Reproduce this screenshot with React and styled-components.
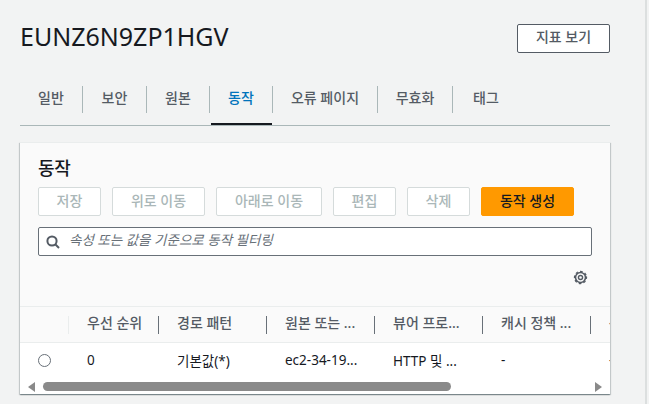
import React from 'react';
import styled, { createGlobalStyle } from 'styled-components';

const GlobalStyle = createGlobalStyle`
  html, body {
    margin: 0;
    height: 100%;
    overflow: hidden;
    background: #f2f3f3;
    font-family: "Noto Sans", "Noto Sans CJK KR", sans-serif;
    color: #16191f;
  }
  * { box-sizing: border-box; }
`;

const Page = styled.div`
  display: flex;
  width: 649px;
  height: 404px;
`;

const Main = styled.main`
  width: 645px;
  padding: 0 35px 0 20px;
`;

const PageEdge = styled.div`
  width: 4px;
  background: #f2f3f3;
  border-left: 2px solid #dcdfdf;
`;

const Header = styled.header`
  display: flex;
  align-items: flex-start;
  justify-content: space-between;
  padding-top: 24px;
  height: 86px;
`;

const Title = styled.h1`
  margin: 0;
  font-size: 25px;
  line-height: 24px;
  font-weight: 400;
`;

const OutlineButton = styled.button`
  width: 93px;
  height: 29px;
  padding: 0 0 5px;
  background: #fff;
  border: 1px solid #545b64;
  border-radius: 2px;
  font: 500 14px "Noto Sans", "Noto Sans CJK KR", sans-serif;
  color: #545b64;
`;

const Tabs = styled.nav`
  display: flex;
  height: 40px;
  border-bottom: 1px solid #aab7b8;
`;

const Tab = styled.div`
  position: relative;
  flex: 0 0 ${p => p.$width}px;
  height: 27px;
  padding: 0 0 5px ${p => (p.$last ? '20px' : '0')};
  display: flex;
  align-items: center;
  justify-content: ${p => (p.$last ? 'flex-start' : 'center')};
  font-size: 14px;
  font-weight: 500;
  color: ${p => (p.$active ? '#0073bb' : '#545b64')};
  border-right: ${p => (p.$last ? '0' : '1px solid #aab7b8')};

  ${p => p.$active && `
    &::after {
      content: '';
      position: absolute;
      left: 1px;
      right: 0;
      top: 37px;
      height: 2px;
      background: #16191f;
    }
  `}
`;

const Card = styled.section`
  margin-top: 16px;
  height: 252px;
  background: #fafafa;
  border-top: 1px solid #eaeded;
  box-shadow: 0 1px 1px 0 rgba(0, 28, 36, 0.3), 1px 1px 1px 0 rgba(0, 28, 36, 0.15), -1px 1px 1px 0 rgba(0, 28, 36, 0.15);
  display: flex;
  flex-direction: column;
`;

const CardHead = styled.div`
  padding: 15px 18px 0;
  height: 163px;
`;

const CardTitle = styled.h2`
  margin: 0;
  font-size: 18px;
  line-height: 21px;
  font-weight: 500;
  letter-spacing: -0.3px;
`;

const Toolbar = styled.div`
  display: flex;
  gap: 11px;
  margin-top: 8px;
`;

const ActionButton = styled.button`
  flex: 0 0 ${p => p.$width}px;
  height: 29px;
  padding: 0 0 4px;
  background: ${p => (p.$primary ? '#ff9900' : '#fff')};
  border: 1px solid ${p => (p.$primary ? '#ff9900' : '#d5dbdb')};
  border-radius: 2px;
  font: 500 14px "Noto Sans", "Noto Sans CJK KR", sans-serif;
  color: ${p => (p.$primary ? '#16191f' : '#aab7b8')};
`;

const SearchBox = styled.div`
  display: flex;
  align-items: center;
  gap: 9px;
  width: 554px;
  height: 29px;
  margin-top: 11px;
  padding: 0 7px;
  background: #fff;
  border: 1px solid #687078;
  border-radius: 2px;
`;

const Placeholder = styled.span`
  font-size: 13.5px;
  line-height: 20px;
  padding-bottom: 4px;
  font-style: italic;
  color: #687078;
`;

const GearRow = styled.div`
  display: flex;
  justify-content: flex-end;
  width: 550px;
  margin-top: 14px;
`;

const TableArea = styled.div`
  overflow: hidden;
`;

const Row = styled.div`
  display: grid;
  grid-template-columns: 49px 90px repeat(5, 108px);
  width: 650px;
  height: ${p => p.$height}px;
  align-items: center;
  background: ${p => (p.$head ? '#fafafa' : '#fff')};
  border-top: ${p => (p.$head ? '1px solid #eaeded' : '0')};
  border-bottom: ${p => (p.$head ? '1px solid #eaeded' : '0')};
`;

const HeadCell = styled.div`
  height: 18px;
  line-height: 14px;
  padding-left: 18px;
  font-size: 14px;
  font-weight: 500;
  color: #545b64;
  white-space: nowrap;
  border-right: 1px solid ${p => (p.$faint ? '#eaeded' : '#687078')};
`;

const Cell = styled.div`
  padding: 0 0 3px 18px;
  font-size: 13.5px;
  color: #16191f;
  white-space: nowrap;
`;

const RadioCell = styled.div`
  padding: 0 0 2px 18px;
  display: flex;
`;

const Radio = styled.span`
  width: 13px;
  height: 13px;
  border-radius: 50%;
  background: #fff;
  border: 1px solid #687078;
`;

const ScrollBar = styled.div`
  flex: 1;
  display: flex;
  align-items: center;
  padding: 0 8px;
  background: #fff;
`;

const ScrollTrack = styled.div`
  flex: 1;
  margin: 0 7px 0 8px;
`;

const ScrollThumb = styled.div`
  width: 408px;
  height: 9px;
  border-radius: 5px;
  background: #8a8a8a;
`;

const Arrow = styled.span`
  width: 0;
  height: 0;
  border-top: 5px solid transparent;
  border-bottom: 5px solid transparent;
  ${p => (p.$right
    ? 'border-left: 7px solid #8a8a8a;'
    : 'border-right: 7px solid #8a8a8a;')}
`;

const SearchIcon = () => (
  <svg width="14" height="14" viewBox="0 0 14 14" fill="none" stroke="#545b64" strokeWidth="2" style={{ flex: 'none' }}>
    <circle cx="6" cy="6" r="4.6" />
    <path d="M9.5 9.5 13 13" />
  </svg>
);

const GearIcon = () => (
  <svg width="15" height="15" viewBox="0 0 16 16" fill="none" stroke="#545b64">
    <circle cx="8" cy="8" r="2.2" strokeWidth="1.5" />
    <circle cx="8" cy="8" r="5.3" strokeWidth="1.6" />
    <circle cx="8" cy="8" r="6.4" strokeWidth="1.4" strokeDasharray="2.8 2.23" transform="rotate(-11 8 8)" />
  </svg>
);

const tabs = [
  { label: '일반', width: 63 },
  { label: '보안', width: 64 },
  { label: '원본', width: 63 },
  { label: '동작', width: 63, active: true },
  { label: '오류 페이지', width: 105 },
  { label: '무효화', width: 75 },
  { label: '태그', width: 74, last: true },
];

const actions = [
  { label: '저장', width: 63 },
  { label: '위로 이동', width: 93 },
  { label: '아래로 이동', width: 106 },
  { label: '편집', width: 63 },
  { label: '삭제', width: 63 },
  { label: '동작 생성', width: 93, primary: true },
];

const headers = ['우선 순위', '경로 패턴', '원본 또는 ...', '뷰어 프로...', '캐시 정책 ...', '-'];
const cells = ['0', '기본값(*)', 'ec2-34-19...', 'HTTP 및 ...', '-', '-'];

const App = () => (
  <Page>
    <GlobalStyle />
    <Main>
      <Header>
        <Title>EUNZ6N9ZP1HGV</Title>
        <OutlineButton>지표 보기</OutlineButton>
      </Header>
      <Tabs>
        {tabs.map(tab => (
          <Tab key={tab.label} $width={tab.width} $active={tab.active} $last={tab.last}>
            {tab.label}
          </Tab>
        ))}
      </Tabs>
      <Card>
        <CardHead>
          <CardTitle>동작</CardTitle>
          <Toolbar>
            {actions.map(action => (
              <ActionButton key={action.label} $width={action.width} $primary={action.primary}>
                {action.label}
              </ActionButton>
            ))}
          </Toolbar>
          <SearchBox>
            <SearchIcon />
            <Placeholder>속성 또는 값을 기준으로 동작 필터링</Placeholder>
          </SearchBox>
          <GearRow>
            <GearIcon />
          </GearRow>
        </CardHead>
        <TableArea>
          <Row $head $height={37}>
            <HeadCell $faint />
            {headers.map(header => (
              <HeadCell key={header}>{header}</HeadCell>
            ))}
          </Row>
          <Row $height={36}>
            <RadioCell><Radio /></RadioCell>
            {cells.map((cell, i) => (
              <Cell key={i}>{cell}</Cell>
            ))}
          </Row>
        </TableArea>
        <ScrollBar>
          <Arrow />
          <ScrollTrack><ScrollThumb /></ScrollTrack>
          <Arrow $right />
        </ScrollBar>
      </Card>
    </Main>
    <PageEdge />
  </Page>
);

export default App;
